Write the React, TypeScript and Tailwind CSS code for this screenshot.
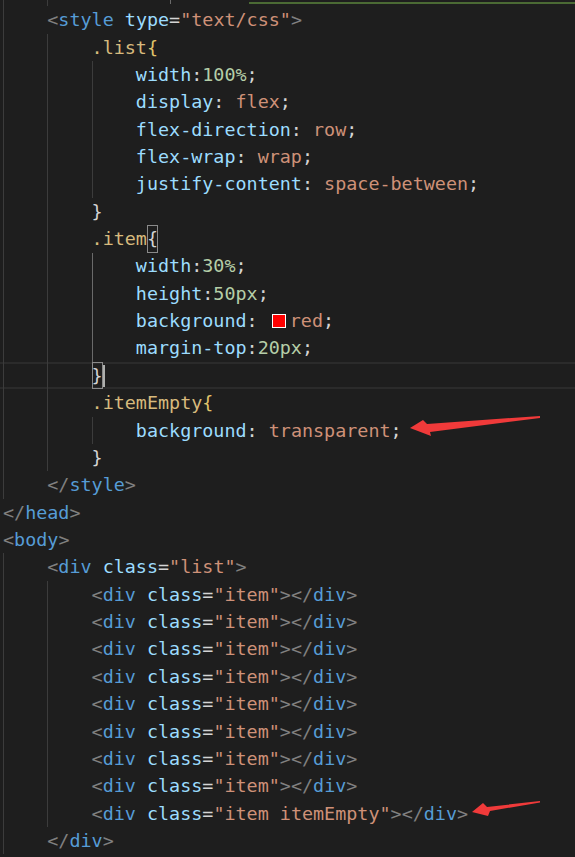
import React from "react";

type Tok = [string, string];

const P = "#808080"; // tag brackets
const T = "#569cd6"; // tag name
const A = "#9cdcfe"; // attribute / property
const S = "#ce9178"; // string / value
const W = "#d4d4d4"; // punctuation
const N = "#b5cea8"; // number
const Y = "#d7ba7d"; // selector
const B = "#e0c36a"; // brace

type Line = {
  indent: number;
  guides: number[];
  active?: number[];
  tokens: (Tok | "SWATCH" | "BOXOPEN" | "BOXCLOSE")[];
  current?: boolean;
};

const itemLine: Line = {
  indent: 2,
  guides: [0, 1],
  tokens: [
    ["<", P], ["div", T], [" ", W], ["class", A], ["=", W], ['"item"', S], [">", P], ["</", P], ["div", T], [">", P],
  ],
};

const lines: Line[] = [
  { indent: 1, guides: [0], tokens: [["<", P], ["style", T], [" ", W], ["type", A], ["=", W], ['"text/css"', S], [">", P]] },
  { indent: 2, guides: [0, 1], tokens: [[".list", Y], ["{", B]] },
  { indent: 3, guides: [0, 1, 2], tokens: [["width", A], [":", W], ["100%", N], [";", W]] },
  { indent: 3, guides: [0, 1, 2], tokens: [["display", A], [": ", W], ["flex", S], [";", W]] },
  { indent: 3, guides: [0, 1, 2], tokens: [["flex-direction", A], [": ", W], ["row", S], [";", W]] },
  { indent: 3, guides: [0, 1, 2], tokens: [["flex-wrap", A], [": ", W], ["wrap", S], [";", W]] },
  { indent: 3, guides: [0, 1, 2], tokens: [["justify-content", A], [": ", W], ["space-between", S], [";", W]] },
  { indent: 2, guides: [0, 1], tokens: [["}", W]] },
  { indent: 2, guides: [0, 1], tokens: [[".item", Y], "BOXOPEN"] },
  { indent: 3, guides: [0, 1, 2], active: [2], tokens: [["width", A], [":", W], ["30%", N], [";", W]] },
  { indent: 3, guides: [0, 1, 2], active: [2], tokens: [["height", A], [":", W], ["50px", N], [";", W]] },
  { indent: 3, guides: [0, 1, 2], active: [2], tokens: [["background", A], [": ", W], "SWATCH", ["red", S], [";", W]] },
  { indent: 3, guides: [0, 1, 2], active: [2], tokens: [["margin-top", A], [":", W], ["20px", N], [";", W]] },
  { indent: 2, guides: [0, 1], tokens: ["BOXCLOSE"], current: true },
  { indent: 2, guides: [0, 1], tokens: [[".itemEmpty", Y], ["{", B]] },
  { indent: 3, guides: [0, 1, 2], tokens: [["background", A], [": ", W], ["transparent", S], [";", W]] },
  { indent: 2, guides: [0, 1], tokens: [["}", W]] },
  { indent: 1, guides: [0], tokens: [["</", P], ["style", T], [">", P]] },
  { indent: 0, guides: [], tokens: [["</", P], ["head", T], [">", P]] },
  { indent: 0, guides: [], tokens: [["<", P], ["body", T], [">", P]] },
  { indent: 1, guides: [0], tokens: [["<", P], ["div", T], [" ", W], ["class", A], ["=", W], ['"list"', S], [">", P]] },
  itemLine, itemLine, itemLine, itemLine, itemLine, itemLine, itemLine, itemLine,
  {
    indent: 2,
    guides: [0, 1],
    tokens: [
      ["<", P], ["div", T], [" ", W], ["class", A], ["=", W], ['"item itemEmpty"', S], [">", P], ["</", P], ["div", T], [">", P],
    ],
  },
  { indent: 1, guides: [0], tokens: [["</", P], ["div", T], [">", P]] },
];

function CodeLine({ line }: { line: Line }) {
  const indents = [];
  for (let i = 0; i < line.indent; i++) {
    const has = line.guides.includes(i);
    const act = line.active?.includes(i);
    indents.push(
      <span
        key={i}
        className={
          "inline-block w-[4ch] self-stretch border-l " +
          (has ? (act ? "border-[#6a6a6a]" : "border-[#3c3c3c]") : "border-transparent")
        }
      />
    );
  }
  return (
    <div
      className={
        "flex h-[27.37px] items-center whitespace-pre pl-[3px] box-border " +
        (line.current ? "border-y-2 border-[#2b2b2b]" : "")
      }
    >
      <span className={"flex self-stretch " + (line.current ? "-my-[2px]" : "")}>{indents}</span>
      {line.tokens.map((t, i) => {
        if (t === "SWATCH")
          return (
            <span
              key={i}
              className="ml-[3px] mr-[4px] inline-block h-[14px] w-[14px] border border-white bg-[#ff0000]"
            />
          );
        if (t === "BOXOPEN")
          return (
            <span key={i} className="text-[#d4d4d4] outline outline-1 -outline-offset-1 outline-[#8a8a8a]">
              {"{"}
            </span>
          );
        if (t === "BOXCLOSE")
          return (
            <span key={i} className="flex items-center">
              <span className="text-[#d4d4d4] outline outline-1 -outline-offset-1 outline-[#8a8a8a]">{"}"}</span>
              <span className="inline-block h-[22px] w-[2px] bg-[#aeafad]" />
            </span>
          );
        return (
          <span key={i} style={{ color: t[1] }}>
            {t[0]}
          </span>
        );
      })}
    </div>
  );
}

export default function App() {
  return (
    <div className="relative h-[857px] w-[575px] overflow-hidden bg-[#1e1e1e] font-['DejaVu_Sans_Mono',monospace] text-[18.4px]">
      {/* partial previous line */}
      <div className="flex h-[6.3px] pl-[3px]">
        <span className="inline-block w-[4ch] border-l border-[#3c3c3c]" />
        <span className="inline-block w-[4ch] border-l border-[#3c3c3c]" />
        <span className="inline-block h-[3px] w-[78px]" />
        <span className="inline-block h-[4px] w-[1px] bg-[#6a6a6a]" />
        <span className="inline-block w-[78px]" />
        <span className="mb-[2px] flex-1 self-end border-b-2 border-[#4b6a34]" />
      </div>
      {lines.map((l, i) => (
        <CodeLine key={i} line={l} />
      ))}

      {/* annotation arrows */}
      <svg className="absolute left-[400px] top-[405px]" width="150" height="40" viewBox="0 0 150 40">
        <polygon points="10,23 23,15 27,19 140,11 140,13 30,27 31,31" fill="#f03a3a" />
      </svg>
      <svg className="absolute left-[460px] top-[795px]" width="90" height="30" viewBox="0 0 90 30">
        <polygon points="12,17 23,8 27,12 80,6 80,7.5 30,16 28,21" fill="#f03a3a" />
      </svg>
    </div>
  );
}
